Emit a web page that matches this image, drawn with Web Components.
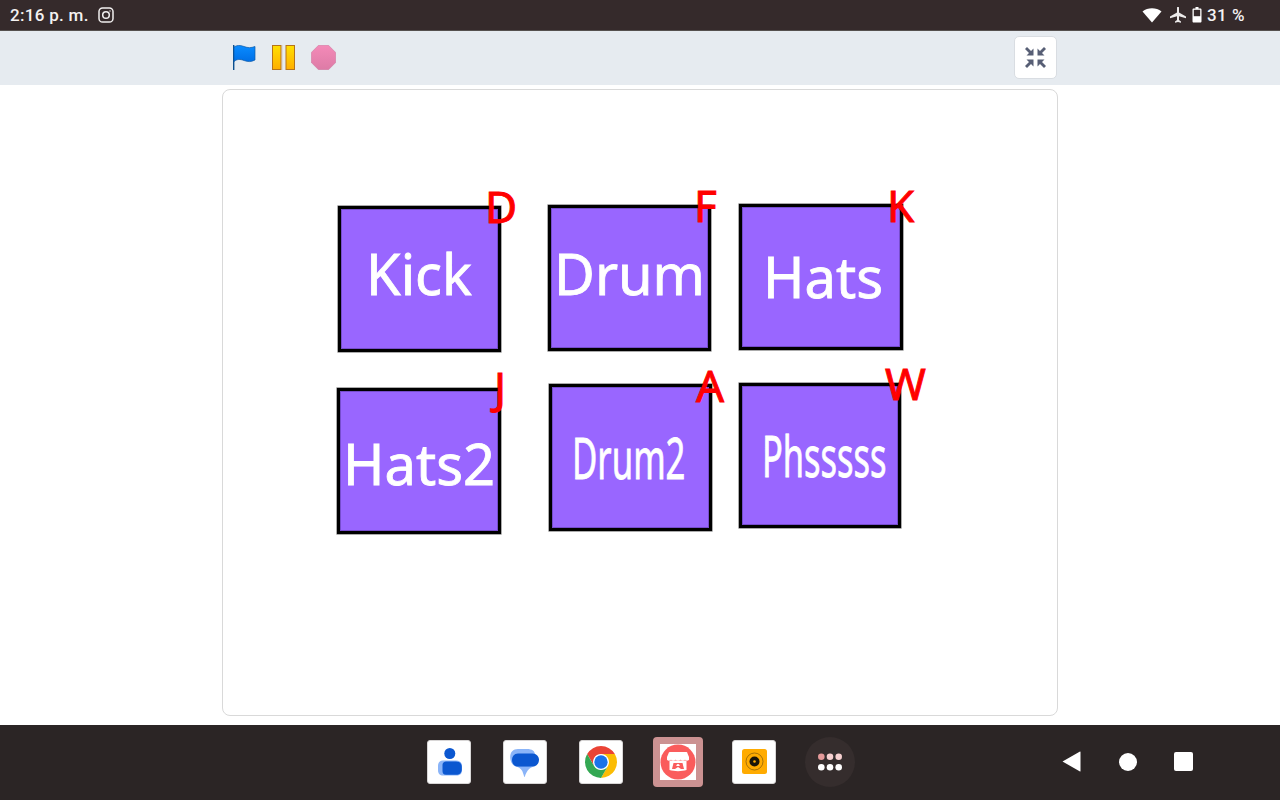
<!DOCTYPE html>
<html lang="es"><head><meta charset="utf-8"><title>Drum pads</title>
<style>
html,body{margin:0;padding:0;width:1280px;height:800px;overflow:hidden;background:#fff;font-family:Roboto,"Noto Sans",sans-serif}
</style></head><body>
<app-shell>
  <status-bar slot="status"></status-bar>
  <stage-toolbar slot="toolbar"></stage-toolbar>
  <pad-stage slot="stage">
    <drum-pad name="Kick" key-label="D" x="115" y="116" w="163" h="146" tx="25" ty="26" kx="144" ky="-30"></drum-pad>
    <drum-pad name="Drum" key-label="F" x="325" y="115" w="163" h="146" tx="3" ty="27" kx="143" ky="-30"></drum-pad>
    <drum-pad name="Hats" key-label="K" x="516" y="114" w="164" h="146" tx="21" ty="31" kx="145" ky="-29"></drum-pad>
    <drum-pad name="Hats2" key-label="J" x="114" y="298" w="164" h="146" tx="3" ty="34" kx="154" ky="-31"></drum-pad>
    <drum-pad name="Drum2" key-label="A" x="326" y="294" w="163" h="147" tx="20" ty="32" kx="144" ky="-29" sx=".62"></drum-pad>
    <drum-pad name="Phsssss" key-label="W" x="516" y="293" w="162" h="145" tx="20" ty="31" kx="143" ky="-30" sx=".615"></drum-pad>
  </pad-stage>
  <nav-dock slot="dock"></nav-dock>
</app-shell>
<script>
function def(name, css, html){
  customElements.define(name, class extends HTMLElement{
    connectedCallback(){
      if(this.shadowRoot) return;
      const r=this.attachShadow({mode:'open'});
      r.innerHTML='<style>'+css+'</style>'+html;
    }
  });
}
def('app-shell',':host{display:flex;flex-direction:column;width:1280px;height:800px}',
 '<slot name="status"></slot><slot name="toolbar"></slot><slot name="stage"></slot><slot name="dock"></slot>');

def('status-bar',`:host{display:flex;align-items:center;height:30px;background:#352a2b;border-bottom:1px solid #55504f;color:#f4f2f2;font:500 17px/30px Roboto,sans-serif;padding:0 35px 0 10px}
 .t{letter-spacing:.3px}.ig{margin-left:9px;display:block}.sp{flex:1}
 .r{display:flex;align-items:center}.r svg{display:block}.p{margin-left:5px;font-size:17px;letter-spacing:.5px}`,
 `<span class="t">2:16 p. m.</span>
 <svg class="ig" width="16" height="16" viewBox="0 0 16 16" fill="none" stroke="#f1efef" stroke-width="1.5"><rect x="1" y="1" width="14" height="14" rx="3.6"/><circle cx="8" cy="8" r="3.3"/><circle cx="12" cy="4" r=".7" fill="#f1efef" stroke="none"/></svg>
 <span class="sp"></span>
 <span class="r">
 <svg width="20" height="18" viewBox="0 0 20 18"><path d="M.5 5.500C5.800 1.200 14.200 1.200 19.500 5.500L10 16.500Z" fill="#fff"/></svg>
 <svg style="margin-left:7px" width="18" height="18" viewBox="0 0 18 18"><path d="M8 1.500C8 .9 10 .9 10 1.500V6.500L17 10.500V12.200L10 10.200V14L12 15.500V16.700L9 16L6 16.700V15.500L8 14V10.200L1 12.200V10.500L8 6.500Z" fill="#eceaea"/></svg>
 <svg style="margin-left:5px" width="10" height="18" viewBox="0 0 10 18"><path d="M3.500 1H6.500V2.500H8.500C9 2.500 9.500 3 9.500 3.500V15.500C9.500 16 9 16.500 8.500 16.500H1.500C1 16.500.5 16 .5 15.500V3.500C.5 3 1 2.500 1.500 2.500H3.500Z" fill="#fff"/><rect x="1.800" y="3.800" width="6.400" height="6.400" fill="#352a2b"/></svg>
 <span class="p">31 %</span></span>`);

def('stage-toolbar',`:host{display:flex;align-items:center;box-sizing:border-box;height:54px;background:#e6ebf0;padding:0 223px 2px 233px}
 svg{display:block}.sp{flex:1}
 button{all:unset;box-sizing:border-box;display:flex;align-items:center;justify-content:center;width:43px;height:43px;background:#fff;border:1px solid #d9dde2;border-radius:5px}`,
 `<svg width="23" height="25" viewBox="0 0 23 25"><defs><linearGradient id="f" x1="0" y1="0" x2="0" y2="1"><stop offset="0" stop-color="#0a8cff"/><stop offset="1" stop-color="#006fe6"/></linearGradient></defs>
   <rect x="0" y="0" width="1.400" height="25" fill="#0b4f8f"/><path d="M1 2C4 0 7 0 11 1.500C15 3 18 3 22 1.500V15C18 17 15 17 11 15.500C7 14 4 14 1 16.500Z" fill="url(#f)" stroke="#0d5aa8" stroke-width=".7"/></svg>
 <svg style="margin-left:16px" width="23" height="25" viewBox="0 0 23 25"><defs><linearGradient id="b" x1="0" y1="0" x2="0" y2="1"><stop offset="0" stop-color="#ffdf00"/><stop offset="1" stop-color="#ffae00"/></linearGradient></defs>
   <rect x=".5" y=".5" width="8.500" height="24" fill="url(#b)" stroke="#b5731a"/><rect x="14" y=".5" width="8.500" height="24" fill="url(#b)" stroke="#b5731a"/><rect x="10" y="0" width="1" height="25" fill="#d9d4cc" opacity=".7"/></svg>
 <svg style="margin-left:16px" width="25" height="25" viewBox="0 0 25 25"><defs><linearGradient id="s" x1="0" y1="0" x2="0" y2="1"><stop offset="0" stop-color="#f48ab8"/><stop offset="1" stop-color="#dd7ba6"/></linearGradient></defs>
   <path d="M7.500 .3H17.500L24.700 7.500V17.500L17.500 24.700H7.500L.3 17.500V7.500Z" fill="url(#s)" stroke="#cf7ca2" stroke-width=".6"/></svg>
 <span class="sp"></span>
 <button aria-label="Salir de pantalla completa"><svg width="21" height="21" viewBox="0 0 21 21" fill="#575e75"><path d="M0 2 2 0 6 4 8.500 1.500V8.500H1.500L4 6Z"/><path d="M21 2 19 0 15 4 12.500 1.500V8.500H19.500L17 6Z"/><path d="M0 19 2 21 6 17 8.500 19.500V12.500H1.500L4 15Z"/><path d="M21 19 19 21 15 17 12.500 19.500V12.500H19.500L17 15Z"/></svg></button>`);

def('pad-stage',`:host{display:block;flex:1;background:#fff;padding:4px 222px 9px}
 .c{position:relative;box-sizing:border-box;height:100%;border:1px solid #d9d9d9;border-radius:8px;background:#fff}`,
 '<div class="c"><slot></slot></div>');

customElements.define('drum-pad',class extends HTMLElement{
  connectedCallback(){
    if(this.shadowRoot) return;
    const a=n=>this.getAttribute(n);
    const r=this.attachShadow({mode:'open'});
    r.innerHTML=`<style>
    :host{position:absolute;box-sizing:border-box;left:${a('x')}px;top:${a('y')}px;width:${a('w')}px;height:${a('h')}px;background:#9966ff;border:3px solid #000;box-shadow:0 0 0 .6px rgba(0,0,0,.55),inset 0 0 0 1px rgba(40,20,90,.3);font-family:"Noto Sans",sans-serif}
    .n{position:absolute;left:${a('tx')}px;top:${a('ty')}px;color:#fff;font-size:56px;line-height:76px;white-space:nowrap;-webkit-text-stroke:.8px #fff;transform-origin:0 50%;transform:scaleX(${a('sx')||1})}
    .k{position:absolute;left:${a('kx')}px;top:${a('ky')}px;color:#f00;font-size:44px;line-height:54px;-webkit-text-stroke:.9px #f00}
    </style><span class="n">${a('name')}</span><span class="k">${a('key-label')}</span>`;
  }
});

def('nav-dock',`:host{display:flex;align-items:center;box-sizing:border-box;height:75px;background:#2b2525;padding:0 0 2px 427px}
 .a{width:44px;height:44px;box-sizing:border-box;border-radius:3px;background:#fff;display:flex;align-items:center;justify-content:center;border:1px solid #d8d6d6;flex:none}
 svg{display:block;flex:none}
 .hl{width:50px;height:50px;border-radius:4px;background:#cc9292;display:flex;align-items:center;justify-content:center;margin:0 29px 0 30px;flex:none}
 .sq{width:36px;height:36px;background:#fff;display:flex;align-items:center;justify-content:center}
 .more{width:50px;height:50px;border-radius:50%;background:#352d2d;margin-left:29px;display:flex;align-items:center;justify-content:center;flex:none}
 .nav{display:flex;align-items:center;margin-left:207px}`,
 `<div class="a"><svg width="25" height="33" viewBox="0 0 25 33"><circle cx="12.800" cy="8.500" r="5.500" fill="#0b57d0"/><path d="M6 15.500H19C23 15.500 25 18 25 21V25C25 29 23 30.500 19 30.500H6C3 30.500 1 29 1 25V21C1 18 2.500 15.500 6 15.500Z" fill="#8ab4f8"/><path d="M9 16.500H19C22 16.500 24.800 18 24.800 22V24C24.800 28 22.500 29.800 19 29.800H9C6.500 29.800 5.500 28 5.500 26V20C5.500 18 7 16.500 9 16.500Z" fill="#0b57d0"/></svg></div>
 <div class="a" style="margin-left:32px"><svg width="30" height="30" viewBox="0 0 30 30"><path d="M8 2H17C22 2 25 4 25 8V14C25 18 22 20 17 20H8C3 20 .2 15 .2 10C.2 5 3 2 8 2Z" fill="#8ab4f8"/><path d="M8 6.500H22.500C26.500 6.500 29 9.500 29 13C29 16.500 26.500 19.700 22.500 19.700H8C4 19.700 2 16.500 2 13C2 9.500 4 6.500 8 6.500Z" fill="#0b57d0"/><path d="M7 19.700H23C20 21 17 22.500 14.500 30.500L13 26C12.500 23 10 21 7 19.700Z" fill="#8ab4f8"/></svg></div>
 <div class="a" style="margin-left:32px"><svg width="32" height="32" viewBox="0 0 48 48"><circle cx="24" cy="24" r="24" fill="#fff"/><path d="M24 12H44.780A24 24 0 0 0 3.220 12L13.610 30A12 12 0 0 1 24 12Z" fill="#ea4335"/><path d="M34.390 30 24 48A24 24 0 0 0 44.780 12H24A12 12 0 0 1 34.390 30Z" fill="#fbbc04"/><path d="M13.610 30 3.220 12A24 24 0 0 0 24 48L34.390 30A12 12 0 0 1 13.610 30Z" fill="#34a853"/><circle cx="24" cy="24" r="10" fill="#1a73e8"/></svg></div>
 <div class="hl"><div class="sq"><svg width="36" height="36" viewBox="0 0 36 36"><circle cx="18" cy="18" r="17.500" fill="#fa5c5c"/><path d="M8.500 9.500C8.500 8.500 9.500 8 10 8H26C27 8 27.500 8.500 27.500 9.500L29 13V15.500C29 17 25.500 17 25 15.500 24.500 17 21 17 20.500 15.500 20 17 16 17 15.500 15.500 15 17 11.500 17 11 15.500 10.500 17 7 17 7 15.500V13Z" fill="#fff"/><path d="M9.500 16.500H26.500V26C22 27.500 14 27.500 9.500 26Z" fill="#fff"/><path d="M13.500 19H22.500L24 25H21L18 23 15 25H12Z" fill="#fa5c5c"/><path d="M17.200 20H18.800V20.800H19.600V22H16.400V20.800H17.200Z" fill="#fff"/></svg></div></div>
 <div class="a"><svg width="25" height="25" viewBox="0 0 25 25"><rect width="25" height="25" rx="2.500" fill="#ffab00"/><circle cx="12.500" cy="12.500" r="8.500" fill="none" stroke="#6b4a08" stroke-width=".6"/><circle cx="12.500" cy="12.500" r="5" fill="#1a1408"/><circle cx="12.500" cy="12.500" r="1.300" fill="#ffab00"/></svg></div>
 <div class="more"><svg width="26" height="18" viewBox="0 0 26 18"><circle cx="4.300" cy="3.700" r="3.300" fill="#e59a9a"/><circle cx="13" cy="3.700" r="3.300" fill="#f6d0d0"/><circle cx="21.700" cy="3.700" r="3.300" fill="#f6d0d0"/><circle cx="4.300" cy="14.300" r="3.300" fill="#fff"/><circle cx="13" cy="14.300" r="3.300" fill="#fff"/><circle cx="21.700" cy="14.300" r="3.300" fill="#fff"/></svg></div>
 <div class="nav"><svg width="19" height="21" viewBox="0 0 19 21"><path d="M.5 10.500 18 .5C18.300 .3 18.500 .5 18.500 1V20C18.500 20.500 18.300 20.700 18 20.500Z" fill="#fff"/></svg>
 <svg style="margin-left:38px" width="18" height="18" viewBox="0 0 18 18"><circle cx="9" cy="9" r="9" fill="#fff"/></svg>
 <svg style="margin-left:37px" width="19" height="19" viewBox="0 0 19 19"><rect width="19" height="19" rx="2" fill="#fff"/></svg></div>`);
</script>
</body></html>
